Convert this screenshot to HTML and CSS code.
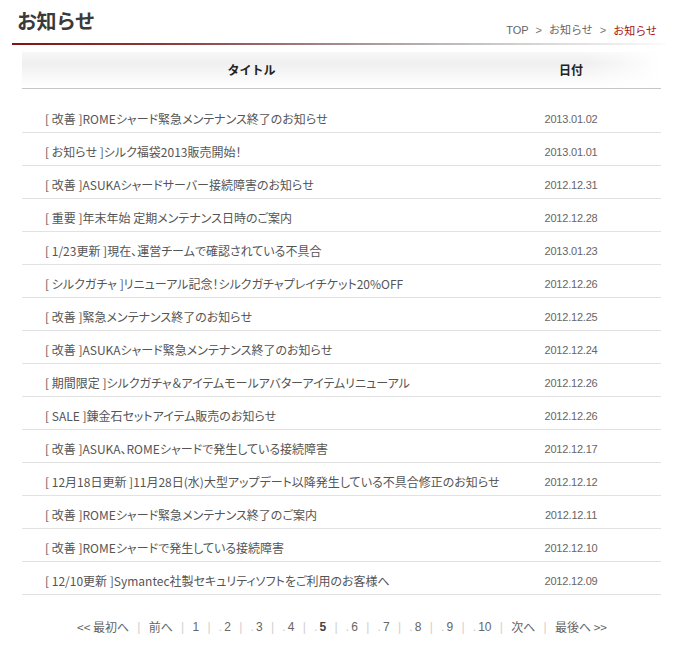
FILE: index.html
```html
<!DOCTYPE html>
<html lang="ja">
<head>
<meta charset="utf-8">
<title>お知らせ</title>
<link rel="stylesheet" href="styles.css">
</head>
<body>
<div class="page">
  <div class="top">
    <h1 class="page-title">お知らせ</h1>
    <nav class="crumbs">
      <a href="#">TOP</a><span class="gt">&gt;</span><a href="#">お知らせ</a><span class="gt">&gt;</span><span class="current">お知らせ</span>
    </nav>
  </div>

  <div class="news">
    <div class="news-head">
      <div class="col-title">タイトル</div>
      <div class="col-date">日付</div>
    </div>
    <ul class="news-list">
      <li class="news-row"><a class="col-title" href="#">[ 改善 ]ROMEシャード緊急メンテナンス終了のお知らせ</a><span class="col-date">2013.01.02</span></li>
      <li class="news-row"><a class="col-title" href="#">[ お知らせ ]シルク福袋2013販売開始！</a><span class="col-date">2013.01.01</span></li>
      <li class="news-row"><a class="col-title" href="#">[ 改善 ]ASUKAシャードサーバー接続障害のお知らせ</a><span class="col-date">2012.12.31</span></li>
      <li class="news-row"><a class="col-title" href="#">[ 重要 ]年末年始 定期メンテナンス日時のご案内</a><span class="col-date">2012.12.28</span></li>
      <li class="news-row"><a class="col-title" href="#">[ 1/23更新 ]現在、運営チームで確認されている不具合</a><span class="col-date">2013.01.23</span></li>
      <li class="news-row"><a class="col-title" href="#">[ シルクガチャ ]リニューアル記念！シルクガチャプレイチケット20%OFF</a><span class="col-date">2012.12.26</span></li>
      <li class="news-row"><a class="col-title" href="#">[ 改善 ]緊急メンテナンス終了のお知らせ</a><span class="col-date">2012.12.25</span></li>
      <li class="news-row"><a class="col-title" href="#">[ 改善 ]ASUKAシャード緊急メンテナンス終了のお知らせ</a><span class="col-date">2012.12.24</span></li>
      <li class="news-row"><a class="col-title" href="#">[ 期間限定 ]シルクガチャ＆アイテムモールアバターアイテムリニューアル</a><span class="col-date">2012.12.26</span></li>
      <li class="news-row"><a class="col-title" href="#">[ SALE ]錬金石セットアイテム販売のお知らせ</a><span class="col-date">2012.12.26</span></li>
      <li class="news-row"><a class="col-title" href="#">[ 改善 ]ASUKA、ROMEシャードで発生している接続障害</a><span class="col-date">2012.12.17</span></li>
      <li class="news-row"><a class="col-title" href="#">[ 12月18日更新 ]11月28日(水)大型アップデート以降発生している不具合修正のお知らせ</a><span class="col-date">2012.12.12</span></li>
      <li class="news-row"><a class="col-title" href="#">[ 改善 ]ROMEシャード緊急メンテナンス終了のご案内</a><span class="col-date">2012.12.11</span></li>
      <li class="news-row"><a class="col-title" href="#">[ 改善 ]ROMEシャードで発生している接続障害</a><span class="col-date">2012.12.10</span></li>
      <li class="news-row"><a class="col-title" href="#">[ 12/10更新 ]Symantec社製セキュリティソフトをご利用のお客様へ</a><span class="col-date">2012.12.09</span></li>
    </ul>
  </div>

  <nav class="pager">
    <a class="pg" href="#">&lt;&lt; 最初へ</a><span class="sep">|</span>
    <a class="pg" href="#">前へ</a><span class="sep">|</span>
    <a class="pg num" href="#">1</a><span class="sep">|</span>
    <a class="pg num" href="#"><i class="dot">.</i>2</a><span class="sep">|</span>
    <a class="pg num" href="#"><i class="dot">.</i>3</a><span class="sep">|</span>
    <a class="pg num" href="#"><i class="dot">.</i>4</a><span class="sep">|</span>
    <span class="pg num on"><i class="dot">.</i>5</span><span class="sep">|</span>
    <a class="pg num" href="#"><i class="dot">.</i>6</a><span class="sep">|</span>
    <a class="pg num" href="#"><i class="dot">.</i>7</a><span class="sep">|</span>
    <a class="pg num" href="#"><i class="dot">.</i>8</a><span class="sep">|</span>
    <a class="pg num" href="#"><i class="dot">.</i>9</a><span class="sep">|</span>
    <a class="pg num" href="#"><i class="dot">.</i>10</a><span class="sep">|</span>
    <a class="pg" href="#">次へ</a><span class="sep">|</span>
    <a class="pg" href="#">最後へ &gt;&gt;</a>
  </nav>
</div>
</body>
</html>
```

FILE: styles.css
```css
html, body {
  margin: 0;
  padding: 0;
  background: #fff;
}

body {
  font-family: "Noto Sans CJK JP", "Liberation Sans", sans-serif;
  font-size: 12px;
  color: #555;
}

a {
  color: inherit;
  text-decoration: none;
}

.page {
  width: 673px;
}

/* page heading with the red rule underneath */
.top {
  display: flex;
  justify-content: space-between;
  align-items: flex-end;
  margin: 0 8px 0 12px;
  padding: 9px 8px 6px 5px;
  border-bottom: 2px solid #861414;
  border-image: linear-gradient(to right, #821212 0%, #8e3c3c 25%, #a58c8c 50%, #c4c0c0 70%, #fbfbfb 100%) 1;
}

.page-title {
  margin: 0 0 4px;
  font-size: 20px;
  line-height: 24px;
  font-weight: bold;
  color: #3a3a3a;
  letter-spacing: -0.5px;
}

.crumbs {
  display: flex;
  align-items: center;
  font-size: 11px;
  line-height: 14px;
  color: #666;
}

.crumbs a {
  font-family: "Liberation Sans", "Noto Sans CJK JP", sans-serif;
}

.crumbs .gt {
  margin: 0 7px;
  color: #777;
  font-family: "Liberation Sans", sans-serif;
}

.crumbs .current {
  color: #a50f0f;
}

/* notice table */
.news {
  margin: 7px 12px 0 22px;
}

.news-head {
  display: grid;
  grid-template-columns: 459px 180px;
  height: 36px;
  line-height: 36px;
  font-weight: bold;
  color: #222;
  text-align: center;
  border-bottom: 1px solid #c6c6c6;
  background:
    linear-gradient(to right, rgba(255,255,255,0) 88%, #fff 100%),
    linear-gradient(to bottom, #f8f8f8 0%, #efefef 30%, #fbfbfb 80%, #fff 100%);
}

.news-list {
  list-style: none;
  margin: 11px 0 0;
  padding: 0;
}

.news-row {
  display: grid;
  grid-template-columns: 459px 180px;
  padding: 11px 0 5px;
  line-height: 16px;
  border-bottom: 1px solid #e2e2e2;
}

.news-row .col-title {
  padding-left: 23px;
  color: #555;
  white-space: nowrap;
  font-feature-settings: "palt";
}

.news-row .col-date {
  text-align: center;
  font-family: "Liberation Sans", sans-serif;
  font-size: 11px;
  color: #666;
  letter-spacing: -0.2px;
}

/* pagination */
.pager {
  display: flex;
  justify-content: center;
  align-items: center;
  margin-top: 16px;
  line-height: 32px;
  color: #666;
  padding-left: 11px;
}

.pager .pg {
  padding: 0 8.3px;
}

.pager .num {
  font-family: "Liberation Sans", sans-serif;
  font-size: 12px;
}

.pager .on {
  font-weight: bold;
  color: #444;
}

.pager .dot {
  font-style: normal;
  font-weight: normal;
  color: #c8c8c8;
  margin-right: 2px;
}

.pager .sep {
  color: #cfcfcf;
  font-family: "Liberation Sans", sans-serif;
}
```
